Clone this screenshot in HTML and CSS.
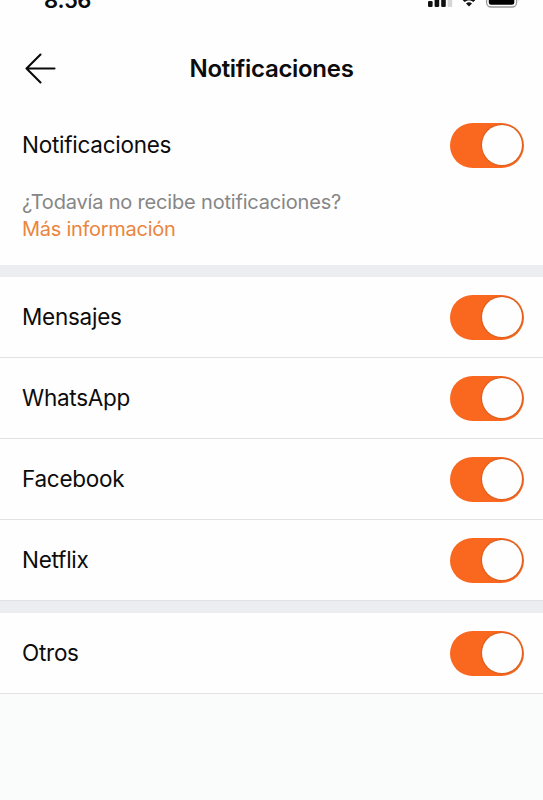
FILE: index.html
```html
<!DOCTYPE html>
<html lang="es">
<head>
    <meta charset="UTF-8">
    <meta name="viewport" content="width=device-width, initial-scale=1.0">
    <title>Notificaciones</title>
    <link rel="stylesheet" href="styles.css">
</head>
<body>
    <div class="status-bar">
        <span class="time">8:56</span>
        <svg class="status-icons" width="96" height="10" viewBox="0 0 96 10">
            <rect x="0" y="1" width="4.6" height="6" rx="1.2" fill="#111"/>
            <rect x="6.6" y="-4" width="4.6" height="11" rx="1.2" fill="#111"/>
            <rect x="13.2" y="-6" width="4.6" height="13" rx="1.2" fill="#111"/>
            <rect x="19.6" y="-9" width="4.6" height="16" rx="1.2" fill="#d6d6d6"/>
            <path d="M34.8 0.2 Q41 -5.3 47.2 0.2 L45.3 2 Q41 -1.6 36.7 2 Z" fill="#111"/>
            <path d="M38 3.5 Q41 1.2 44 3.5 L41 6.6 Z" fill="#111"/>
            <rect x="58.6" y="-10" width="30" height="17" rx="4.5" fill="none" stroke="#999" stroke-width="1.3"/>
            <rect x="60.8" y="-8" width="25.5" height="12.8" rx="2.5" fill="#000"/>
            <path d="M90.4 -4 Q92.6 -2 90.4 1 Z" fill="#aaa"/>
        </svg>
    </div>
    <header class="header">
        <svg class="back" width="32" height="32" viewBox="0 0 32 32">
            <path d="M16.5 1.5 L2.5 15.5 L16.5 29.5 M2.5 15.5 H30.5" fill="none" stroke="#0a0a0a" stroke-width="2.1" stroke-linecap="round" stroke-linejoin="round"/>
        </svg>
        <h1>Notificaciones</h1>
    </header>
    <main>
        <section class="main-setting">
            <div class="row row-main">
                <span class="label">Notificaciones</span>
                <span class="toggle"></span>
            </div>
            <div class="help">
                <p>¿Todavía no recibe notificaciones?</p>
                <a class="more">Más información</a>
            </div>
        </section>
        <section class="group">
            <div class="row">
                <span class="label">Mensajes</span>
                <span class="toggle"></span>
            </div>
            <div class="row">
                <span class="label">WhatsApp</span>
                <span class="toggle"></span>
            </div>
            <div class="row">
                <span class="label">Facebook</span>
                <span class="toggle"></span>
            </div>
            <div class="row">
                <span class="label">Netflix</span>
                <span class="toggle"></span>
            </div>
        </section>
        <section class="group">
            <div class="row">
                <span class="label">Otros</span>
                <span class="toggle"></span>
            </div>
        </section>
    </main>
</body>
</html>
```
FILE: styles.css
```css
* {
    margin: 0;
    padding: 0;
    box-sizing: border-box;
}
body {
    height: 800px;
    overflow: hidden;
    background: #fafcfc;
    font-family: Inter, sans-serif;
    color: #0c0c0c;
}
.status-bar {
    display: flex;
    justify-content: space-between;
    height: 20px;
    padding: 0 19px 0 44px;
    background: #fefefe;
    overflow: hidden;
}
.time {
    margin-top: -13px;
    font-size: 22px;
    font-weight: 600;
    line-height: 26px;
    letter-spacing: -0.6px;
}
.header {
    display: grid;
    grid-template-columns: 32px 1fr 32px;
    align-items: center;
    height: 97px;
    padding: 0 24px;
    background: #fefefe;
}
h1 {
    font-size: 24px;
    font-weight: 600;
    line-height: 30px;
    letter-spacing: -0.3px;
    text-align: center;
}
.main-setting {
    height: 148px;
    background: #fefefe;
}
.row {
    display: flex;
    justify-content: space-between;
    align-items: center;
    height: 81px;
    padding: 0 19px 0 22px;
    background: #fefefe;
    border-bottom: 1px solid #e2e2e2;
}
.row-main {
    height: 56px;
    border-bottom: none;
}
.label {
    font-size: 22.5px;
    line-height: 30px;
    letter-spacing: -0.26px;
}
.toggle {
    width: 74px;
    height: 45px;
    padding: 2.5px 2.5px 2.5px 32px;
    border-radius: 23px;
    background: #fa6820;
}
.toggle::after {
    content: '';
    display: block;
    width: 40px;
    height: 40px;
    border-radius: 50%;
    background: #fefefe;
    box-shadow: 0 0 2px rgba(120, 50, 10, 0.7);
}
.help {
    padding: 16px 22px 0;
    font-size: 20px;
    line-height: 27px;
    letter-spacing: -0.18px;
    color: #868686;
}
.more {
    display: block;
    letter-spacing: -0.27px;
    color: #ea853f;
}
.group {
    border-top: 12px solid #ecedf0;
}
```
